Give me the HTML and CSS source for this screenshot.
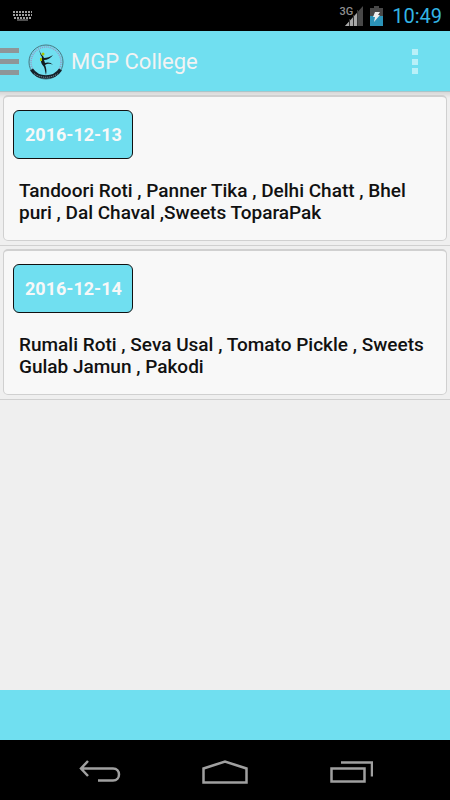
FILE: index.html
```html
<!DOCTYPE html>
<html lang="en">
<head>
<meta charset="utf-8">
<meta name="viewport" content="width=device-width, initial-scale=1">
<title>MGP College</title>
<link rel="stylesheet" href="styles.css">
</head>
<body>
<div class="status">
  <svg class="keyboard" width="20" height="10" viewBox="0 0 20 10" aria-hidden="true">
    <path d="M0 1h19M0 4h19M1 7h17" stroke="#a0a0a0" stroke-width="2" stroke-dasharray="2 1"/>
    <path d="M4 9h11" stroke="#a0a0a0" stroke-width="1"/>
  </svg>
  <div class="indicators">
    <span class="network">3G</span>
    <svg class="signal" width="18" height="20" viewBox="0 0 18 20" aria-hidden="true">
      <path d="M0 20 18 0v20z" fill="#484848"/>
      <path d="M0 20 13 6v14z" fill="#a8a8a8"/>
      <path d="M4.500 13v7M8.500 9v11M12.500 4v16" stroke="#333" stroke-width="1"/>
    </svg>
    <svg class="battery" width="13" height="20" viewBox="0 0 13 20" aria-hidden="true">
      <path d="M4 0h5v2h4v18H0V2h4z" fill="#484848"/>
      <path d="M0 10h13v10H0z" fill="#2b93b8"/>
      <path d="M5 6h5L8 9h2l-6 7 1-5H3z" fill="#eee"/>
    </svg>
    <time class="clock">10:49</time>
  </div>
</div>
<header class="appbar">
  <button class="menu" aria-label="Open menu">
    <svg width="19" height="28" viewBox="0 0 19 28" aria-hidden="true"><path d="M0 0h19v5H0zM0 11h19v5H0zM0 22h19v5H0z" fill="#8e9698"/></svg>
  </button>
  <svg class="logo" width="36" height="36" viewBox="0 0 36 36" aria-hidden="true">
    <circle cx="18" cy="18" r="17" fill="none" stroke="#49747f" stroke-width="1"/>
    <circle cx="18" cy="18" r="15" fill="none" stroke="#9b96c4" stroke-width="1.500" stroke-dasharray="1 1"/>
    <path d="M3.500 25.500C10 35.500 26 35.500 32.500 25.500" fill="none" stroke="#15222b" stroke-width="3.500"/>
    <path d="M6 29.500C12 34.500 24 34.500 30 29.500" fill="none" stroke="#90a7b4" stroke-width="1" stroke-dasharray="1 1"/>
    <path d="M11.500 5c0 4 1 6 2.500 8l-1 4c0 3 2 4 3 6s1 5 2 8c1-4 0-8-1-10 2-1 5-2 8 0-2-3-6-3-8-2l-1-3c3 0 7-2 9-5-3 2-6 3-9 3l-1-2c-2-2-3-3-3.500-7z" fill="#111b20"/>
    <circle cx="15" cy="10" r="1.500" fill="#a6c800"/>
    <path d="M12 14h2v3h-2z" fill="#a6c800"/>
  </svg>
  <h1 class="title">MGP College</h1>
  <button class="more" aria-label="More options">
    <svg width="6" height="26" viewBox="0 0 6 26" aria-hidden="true"><path d="M0 0h6v6H0zM0 10h6v6H0zM0 19h6v6H0z" fill="#b9f0f8"/></svg>
  </button>
</header>
<main class="list">
  <article class="entry">
    <div class="card">
      <time class="date" datetime="2016-12-13">2016-12-13</time>
      <p class="dishes">Tandoori Roti , Panner Tika , Delhi Chatt , Bhel puri , Dal Chaval ,Sweets ToparaPak</p>
    </div>
  </article>
  <article class="entry">
    <div class="card">
      <time class="date" datetime="2016-12-14">2016-12-14</time>
      <p class="dishes">Rumali Roti , Seva Usal , Tomato Pickle , Sweets Gulab Jamun , Pakodi</p>
    </div>
  </article>
</main>
<footer class="banner"></footer>
<nav class="system">
  <button aria-label="Back">
    <svg width="44" height="24" viewBox="0 0 44 24" aria-hidden="true"><path d="M11 1 4 8.500 11 16M4 8.500h32c8 0 8 12 0 12H21" fill="none" stroke="#a0a0a0" stroke-width="2.500"/></svg>
  </button>
  <button aria-label="Home">
    <svg width="46" height="26" viewBox="0 0 46 26" aria-hidden="true"><path d="M1.500 9.500 23 2.500l21.500 7v14h-43z" fill="none" stroke="#a0a0a0" stroke-width="2.500"/></svg>
  </button>
  <button aria-label="Recent apps">
    <svg width="44" height="24" viewBox="0 0 44 24" aria-hidden="true"><path d="M2.500 8.500h33v13h-33zM12 2.500h31v14" fill="none" stroke="#a0a0a0" stroke-width="2.500"/></svg>
  </button>
</nav>
</body>
</html>
```
FILE: styles.css
```css
* { box-sizing: border-box; }
body {
  margin: 0;
  min-height: 100vh;
  display: flex;
  flex-direction: column;
  background: #efefef;
  color: #111;
  font-family: Roboto, sans-serif;
}
button {
  padding: 0;
  border: 0;
  background: none;
  display: flex;
  align-items: center;
  justify-content: center;
}
svg { display: block; flex: none; }
h1, p { margin: 0; }
.status {
  height: 31px;
  padding: 0 8px 0 13px;
  background: #000;
  display: flex;
  align-items: center;
  justify-content: space-between;
}
.indicators { display: flex; align-items: center; }
.network {
  position: relative;
  z-index: 1;
  color: #909090;
  font-size: 11px;
  line-height: 16px;
  font-weight: 500;
  align-self: flex-start;
}
.signal { margin-left: -8px; }
.battery { margin: 0 9px 0 7px; }
.clock { color: #33b5e5; font-size: 20px; line-height: 24px; }
.appbar {
  height: 61px;
  padding: 2px 32px 0 0;
  background: #70dff0;
  border-bottom: 1px solid #a9c5c9;
  display: flex;
  align-items: center;
}
.logo { margin: 0 7px 0 9px; }
.title {
  flex: 1;
  color: #f3f3f3;
  font-size: 22px;
  line-height: 28px;
  font-weight: 400;
}
.list {
  flex: 1;
  background: linear-gradient(#d7d7d7, #efefef 6px);
}
.entry { padding: 3px 3px 4px; border-bottom: 1px solid #d0d0d0; }
.card {
  min-height: 146px;
  padding: 13px 20px 16px 9px;
  background: #f8f8f8;
  border: 1px solid #d0d0d0;
  border-top-width: 2px;
  border-radius: 5px;
}
.date {
  display: inline-block;
  padding: 12px 10px 12px 11px;
  background: #70dff0;
  border: 1px solid #111;
  border-radius: 6px;
  color: #f8f8f8;
  font-size: 18px;
  line-height: 23px;
  font-weight: 700;
  vertical-align: top;
}
.dishes {
  margin: 21px 0 0 6px;
  font-size: 19px;
  line-height: 22px;
  font-weight: 500;
}
.banner { height: 50px; background: #70dff0; }
.system {
  height: 60px;
  padding: 3px 36px 0;
  background: #000;
  display: flex;
}
.system button { flex: 1; }
```
